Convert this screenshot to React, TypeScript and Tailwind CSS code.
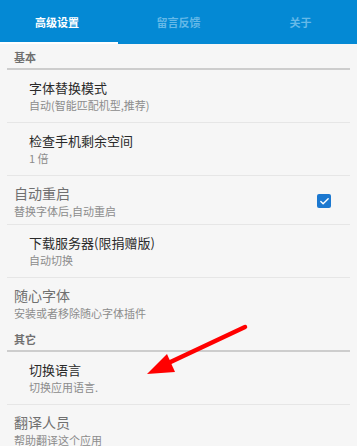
import { Check } from 'lucide-react'

const font = { fontFamily: '"Noto Sans CJK SC", "Noto Sans", sans-serif' }

type RowProps = {
  title: string
  summary: string
  indent?: boolean
  h: string
  last?: boolean
  checked?: boolean
}

const Row = ({ title, summary, indent, h, last, checked }: RowProps) => (
  <div className={`flex items-start justify-between ${h} ${last ? '' : 'border-b border-[#e6e6e6]'}`}>
    {indent ? (
      <div className="pl-[22px] pt-[10px] flex flex-col gap-[2px]">
        <span className="text-[13px] leading-[16px] text-[#2a2a2a]">{title}</span>
        <span className="text-[11px] leading-[14px] text-[#8c8c8c]">{summary}</span>
      </div>
    ) : (
      <div className="pl-[7px] pt-[9px] flex flex-col gap-[2px]">
        <span className="text-[14px] leading-[17px] text-[#707070]">{title}</span>
        <span className="text-[11px] leading-[14px] text-[#8c8c8c]">{summary}</span>
      </div>
    )}
    {checked && (
      <div className="mt-[18px] mr-[19px] w-[14px] h-[14px] rounded-[2px] bg-[#1b78d0] flex items-center justify-center">
        <Check size={11} strokeWidth={3} className="text-white" />
      </div>
    )}
  </div>
)

const Section = ({ label, h }: { label: string; h: string }) => (
  <div className={`${h} border-b-2 border-[#cdcdcd] pl-[7px] flex items-end pb-[4px]`}>
    <span className="text-[11px] leading-[14px] font-bold text-[#707070]">{label}</span>
  </div>
)

export default function App() {
  return (
    <div className="relative w-[357px] h-[446px] overflow-hidden bg-[#f6f6f6]" style={font}>
      <div className="flex h-[44px] bg-[#0489d4]">
        <div className="relative flex-1 flex items-center justify-center">
          <span className="text-[11px] font-bold text-white -ml-[5px]">高级设置</span>
          <div className="absolute bottom-0 left-0 h-[2px] w-[118px] bg-white" />
        </div>
        <div className="flex-1 flex items-center justify-center">
          <span className="text-[11px] font-bold text-[#66b9e8]">留言反馈</span>
        </div>
        <div className="flex-1 flex items-center justify-center">
          <span className="text-[11px] font-bold text-[#66b9e8] ml-[6px]">关于</span>
        </div>
      </div>

      <div className="mx-[7px]">
        <Section label="基本" h="h-[26px]" />
        <Row title="字体替换模式" summary="自动(智能匹配机型,推荐)" indent h="h-[53px]" />
        <Row title="检查手机剩余空间" summary="1 倍" indent h="h-[53px]" />
        <Row title="自动重启" summary="替换字体后,自动重启" h="h-[49px]" checked />
        <Row title="下载服务器(限捐赠版)" summary="自动切换" indent h="h-[53px]" />
        <Row title="随心字体" summary="安装或者移除随心字体插件" h="h-[50px]" last />
        <Section label="其它" h="h-[24px]" />
        <Row title="切换语言" summary="切换应用语言." indent h="h-[53px]" />
        <Row title="翻译人员" summary="帮助翻译这个应用" h="h-[50px]" last />
      </div>

      <svg className="absolute left-0 top-0 pointer-events-none" width="357" height="446">
        <line x1="245" y1="327" x2="162" y2="366" stroke="#ff0000" strokeWidth="4.5" strokeLinecap="round" />
        <polygon points="147,374 167,354 175,372" fill="#ff0000" />
      </svg>
    </div>
  )
}
